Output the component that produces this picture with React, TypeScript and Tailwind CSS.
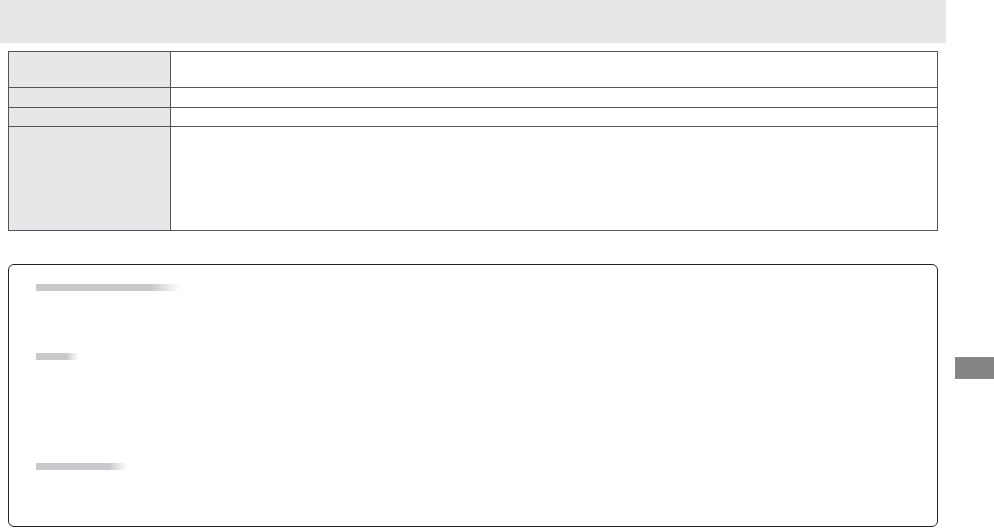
export default function App() {
  return (
    <div className="w-[994px] h-[528px] bg-white flex overflow-hidden" style={{ fontFamily: '"Liberation Sans", Arial, sans-serif' }}>
      <div className="w-[946px] flex flex-col">
        <div className="h-[43px] bg-[#e6e7e8]" />
        <div className="ml-[8px] mt-[8px] w-[930px] border border-[#555555] flex flex-col">
          <div className="flex h-[35px]">
            <div className="w-[162px] bg-[#e6e7e8] border-r border-[#555555]" />
            <div className="flex-1" />
          </div>
          <div className="flex h-[20px] border-t border-[#555555]">
            <div className="w-[162px] bg-[#e6e7e8] border-r border-[#555555]" />
            <div className="flex-1" />
          </div>
          <div className="flex h-[19px] border-t border-[#555555]">
            <div className="w-[162px] bg-[#e6e7e8] border-r border-[#555555]" />
            <div className="flex-1" />
          </div>
          <div className="flex h-[104px] border-t border-[#555555]">
            <div className="w-[162px] bg-[#e6e7e8] border-r border-[#555555]" />
            <div className="flex-1" />
          </div>
        </div>
        <div className="ml-[8px] mt-[33px] w-[930px] h-[263px] border border-[#222222] rounded-[6px] flex flex-col pl-[27px] pt-[19px]">
          <div className="w-[144px] h-[7px] bg-[linear-gradient(to_right,#c8c9ca_0%,#c8c9ca_80%,#ffffff_100%)]" />
          <div className="mt-[62px] w-[43px] h-[7px] bg-[linear-gradient(to_right,#c8c9ca_0%,#c8c9ca_70%,#ffffff_100%)]" />
          <div className="mt-[103px] w-[91px] h-[7px] bg-[linear-gradient(to_right,#c8c9ca_0%,#c8c9ca_80%,#ffffff_100%)]" />
        </div>
      </div>
      <div className="flex-1 flex flex-col pt-[357px] pl-[9px]">
        <div className="h-[22px] bg-[#848587]" />
      </div>
    </div>
  );
}
